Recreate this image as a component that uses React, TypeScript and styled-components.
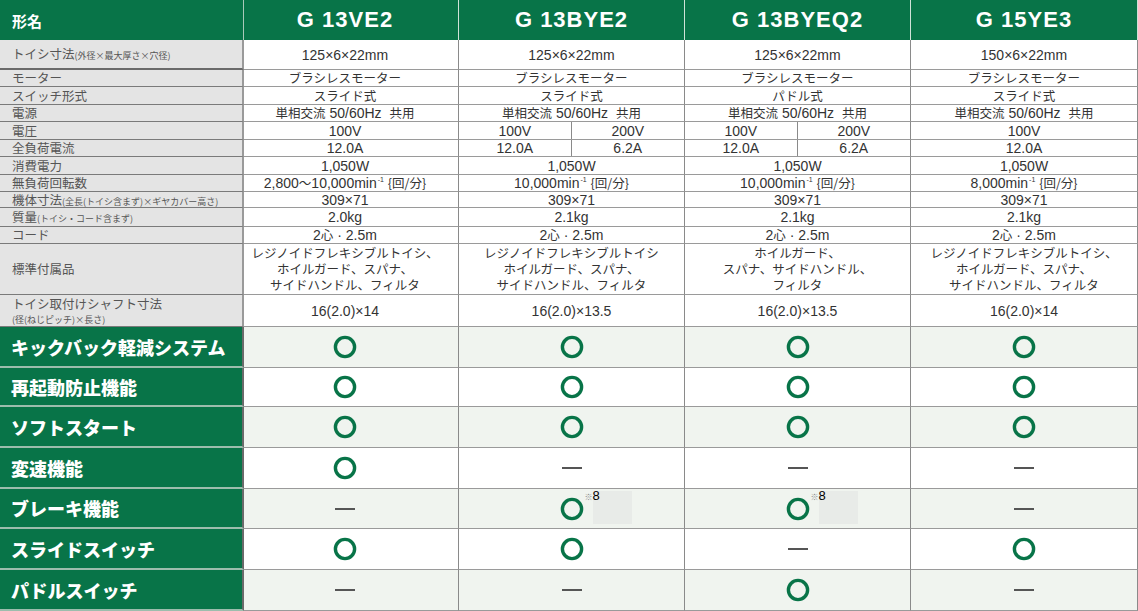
import React from "react";
import styled, { createGlobalStyle } from "styled-components";

const GREEN = "#087448";

const GlobalStyle = createGlobalStyle`
  body {
    margin: 0;
    background: #fff;
    font-family: "Liberation Sans", "Noto Sans CJK JP", sans-serif;
  }
`;

const Table = styled.div`
  width: 1138px;
  display: flex;
  flex-direction: column;
`;

const Row = styled.div<{ $h: number }>`
  display: grid;
  grid-template-columns: 244px 215px 226px 226px 227px;
  grid-template-rows: ${(p) => p.$h}px;
  height: ${(p) => p.$h}px;
`;

const HeadLabel = styled.div`
  background: ${GREEN};
  color: #fff;
  font-family: "Noto Sans CJK JP", sans-serif;
  font-weight: 700;
  font-size: 15px;
  display: flex;
  align-items: center;
  padding-left: 12px;
  border-right: 1px solid #a9c9b9;
`;

const HeadCell = styled.div<{ $first?: boolean }>`
  background: ${GREEN};
  color: #fff;
  font-weight: 700;
  font-size: 22px;
  letter-spacing: 1px;
  display: flex;
  align-items: center;
  justify-content: center;
  padding-right: ${(p) => (p.$first ? 12 : 0)}px;
  border-right: 1px solid #cfe2d8;
`;

const SpecLabel = styled.div<{ $thick?: boolean }>`
  background: #e4e4e4;
  color: #555;
  font-family: "Noto Sans CJK JP", sans-serif;
  font-size: 12.5px;
  line-height: 15px;
  display: flex;
  flex-direction: column;
  justify-content: center;
  padding-left: 12px;
  border-right: 2px solid #9a9a9a;
  border-bottom: ${(p) => (p.$thick ? "2px solid #6a6a6a" : "1px solid #7a7a7a")};
  white-space: nowrap;
  min-height: 0;
`;

const LabelLine = styled.span<{ $gap?: boolean }>`
  display: block;
  line-height: 14px;
  margin-bottom: ${(p) => (p.$gap ? 4 : 0)}px;
`;

const Small = styled.span`
  font-size: 9px;
  line-height: 0;
`;

const SmallLine = styled.span`
  display: block;
  font-size: 9px;
  line-height: 10px;
`;

const Cell = styled.div<{ $first?: boolean; $tint?: boolean }>`
  background: ${(p) => (p.$tint ? "#f0f4ef" : "#fff")};
  color: #333;
  font-family: "Liberation Sans", "Noto Sans CJK JP", sans-serif;
  font-size: 14px;
  line-height: 16px;
  text-align: center;
  display: flex;
  align-items: center;
  justify-content: center;
  padding-right: ${(p) => (p.$first ? 12 : 0)}px;
  border-right: 1px solid #8a8a8a;
  border-bottom: 1px solid #9a9a9a;
  position: relative;
  white-space: nowrap;
  min-height: 0;
`;

const Jp = styled.span`
  font-family: "Noto Sans CJK JP", sans-serif;
  font-size: 12.5px;
`;

const AccessoryLine = styled.span`
  display: block;
  font-family: "Noto Sans CJK JP", sans-serif;
  font-size: 12.5px;
  line-height: 16px;
`;

const Split = styled.div`
  align-self: stretch;
  width: 100%;
  display: grid;
  grid-template-columns: 1fr 1fr;
`;

const Half = styled.div<{ $left?: boolean }>`
  display: flex;
  align-items: center;
  justify-content: center;
  border-right: ${(p) => (p.$left ? "1px solid #8a8a8a" : "none")};
`;

const Sup = styled.sup`
  font-size: 7px;
  vertical-align: 6px;
  line-height: 0;
  margin-left: 1px;
`;

const FeatureLabel = styled.div`
  background: ${GREEN};
  color: #fff;
  font-family: "Noto Sans CJK JP", sans-serif;
  font-weight: 900;
  font-size: 18px;
  display: flex;
  align-items: center;
  padding-left: 11px;
  border-right: 2px solid #6a6a6a;
  border-bottom: 2px solid #9cbdad;
  white-space: nowrap;
`;

const Dash = styled.span`
  display: block;
  width: 20px;
  height: 2px;
  background: #555;
`;

const Note = styled.span`
  position: absolute;
  left: calc(50% + 13px);
  top: 0;
  font-size: 13px;
  line-height: 14px;
  color: #000;
`;

const NoteText = styled.span`
  position: relative;
  display: flex;
  align-items: flex-start;
`;

const NoteMark = styled.span`
  font-family: "Noto Sans CJK JP", sans-serif;
  font-size: 8px;
  color: #888;
  margin-top: 1px;
`;

const NoteBox = styled.span`
  position: absolute;
  left: 8px;
  top: 2px;
  width: 39px;
  height: 33px;
  background: #e8ebe8;
`;

const Circle = () => (
  <svg width="24" height="24" viewBox="0 0 24 24">
    <circle cx="12" cy="12" r="9.6" fill="none" stroke={GREEN} strokeWidth="3.4" />
  </svg>
);

type Val = React.ReactNode | [string, string];

type Spec = {
  label: string;
  sub?: string;
  subBelow?: boolean;
  h: number;
  thick?: boolean;
  values: Val[];
};

const CJK = /([\u3000-\u9fff\uff00-\uffef]+)/;

// CJK runs get the Japanese font at a smaller size than the Latin digits
const jp = (text: string) => (
  <span>
    {text.split(CJK).map((part, i) =>
      i % 2 === 1 ? <Jp key={i}>{part}</Jp> : part
    )}
  </span>
);

const rpm = (v: string) => (
  <span>
    {jp(v)}min<Sup>-1</Sup> <Jp>{"{回/分}"}</Jp>
  </span>
);

const lines = (...ls: string[]) => (
  <div>
    {ls.map((l) => (
      <AccessoryLine key={l}>{l}</AccessoryLine>
    ))}
  </div>
);

const all = (v: Val): Val[] => [v, v, v, v];

const specs: Spec[] = [
  {
    label: "トイシ寸法",
    sub: "(外径×最大厚さ×穴径)",
    h: 30,
    thick: true,
    values: ["125×6×22mm", "125×6×22mm", "125×6×22mm", "150×6×22mm"],
  },
  { label: "モーター", h: 17, values: all("ブラシレスモーター") },
  { label: "スイッチ形式", h: 18, values: ["スライド式", "スライド式", "パドル式", "スライド式"] },
  { label: "電源", h: 17, values: all("単相交流 50/60Hz\u00a0 共用") },
  { label: "電圧", h: 18, values: ["100V", ["100V", "200V"], ["100V", "200V"], "100V"] },
  { label: "全負荷電流", h: 17, values: ["12.0A", ["12.0A", "6.2A"], ["12.0A", "6.2A"], "12.0A"] },
  { label: "消費電力", h: 18, values: all("1,050W") },
  {
    label: "無負荷回転数",
    h: 17,
    values: [rpm("2,800～10,000"), rpm("10,000"), rpm("10,000"), rpm("8,000")],
  },
  { label: "機体寸法", sub: "(全長(トイシ含まず)×ギヤカバー高さ)", h: 16, values: all("309×71") },
  { label: "質量", sub: "(トイシ・コード含まず)", h: 19, values: ["2.0kg", "2.1kg", "2.1kg", "2.1kg"] },
  { label: "コード", h: 17, values: all("2心 · 2.5m") },
  {
    label: "標準付属品",
    h: 51,
    values: [
      lines("レジノイドフレキシブルトイシ、", "ホイルガード、スパナ、", "サイドハンドル、フィルタ"),
      lines("レジノイドフレキシブルトイシ", "ホイルガード、スパナ、", "サイドハンドル、フィルタ"),
      lines("ホイルガード、", "スパナ、サイドハンドル、", "フィルタ"),
      lines("レジノイドフレキシブルトイシ、", "ホイルガード、スパナ、", "サイドハンドル、フィルタ"),
    ],
  },
  {
    label: "トイシ取付けシャフト寸法",
    sub: "(径(ねじピッチ)×長さ)",
    subBelow: true,
    h: 32,
    values: ["16(2.0)×14", "16(2.0)×13.5", "16(2.0)×13.5", "16(2.0)×14"],
  },
];

type Mark = "o" | "-" | "o8";

const features: { label: string; h: number; marks: Mark[] }[] = [
  { label: "キックバック軽減システム", h: 41, marks: ["o", "o", "o", "o"] },
  { label: "再起動防止機能", h: 39, marks: ["o", "o", "o", "o"] },
  { label: "ソフトスタート", h: 41, marks: ["o", "o", "o", "o"] },
  { label: "変速機能", h: 41, marks: ["o", "-", "-", "-"] },
  { label: "ブレーキ機能", h: 40, marks: ["-", "o8", "o8", "-"] },
  { label: "スライドスイッチ", h: 41, marks: ["o", "o", "-", "o"] },
  { label: "パドルスイッチ", h: 41, marks: ["-", "-", "o", "-"] },
];

const models = ["G 13VE2", "G 13BYE2", "G 13BYEQ2", "G 15YE3"];

const renderValue = (v: Val) => {
  if (Array.isArray(v) && v.length === 2 && typeof v[0] === "string") {
    return (
      <Split>
        <Half $left>{jp(v[0])}</Half>
        <Half>{jp(v[1] as string)}</Half>
      </Split>
    );
  }
  if (typeof v === "string") return jp(v);
  return v as React.ReactNode;
};

const renderMark = (m: Mark) => {
  if (m === "-") return <Dash />;
  return (
    <>
      <Circle />
      {m === "o8" && (
        <Note>
          <NoteBox />
          <NoteText>
            <NoteMark>※</NoteMark>8
          </NoteText>
        </Note>
      )}
    </>
  );
};

const App: React.FC = () => {
  return (
    <>
      <GlobalStyle />
      <Table>
        <Row $h={40}>
          <HeadLabel>形名</HeadLabel>
          {models.map((m, i) => (
            <HeadCell key={m} $first={i === 0}>
              {m}
            </HeadCell>
          ))}
        </Row>
        {specs.map((s) => (
          <Row key={s.label} $h={s.h}>
            <SpecLabel $thick={s.thick}>
              {s.subBelow ? (
                <>
                  <LabelLine $gap>{s.label}</LabelLine>
                  <SmallLine>{s.sub}</SmallLine>
                </>
              ) : (
                <LabelLine>
                  {s.label}
                  {s.sub && <Small>{s.sub}</Small>}
                </LabelLine>
              )}
            </SpecLabel>
            {s.values.map((v, i) => (
              <Cell key={i} $first={i === 0}>
                {renderValue(v)}
              </Cell>
            ))}
          </Row>
        ))}
        {features.map((f, r) => (
          <Row key={f.label} $h={f.h}>
            <FeatureLabel>{f.label}</FeatureLabel>
            {f.marks.map((m, i) => (
              <Cell key={i} $first={i === 0} $tint={r % 2 === 0}>
                {renderMark(m)}
              </Cell>
            ))}
          </Row>
        ))}
      </Table>
    </>
  );
};

export default App;
